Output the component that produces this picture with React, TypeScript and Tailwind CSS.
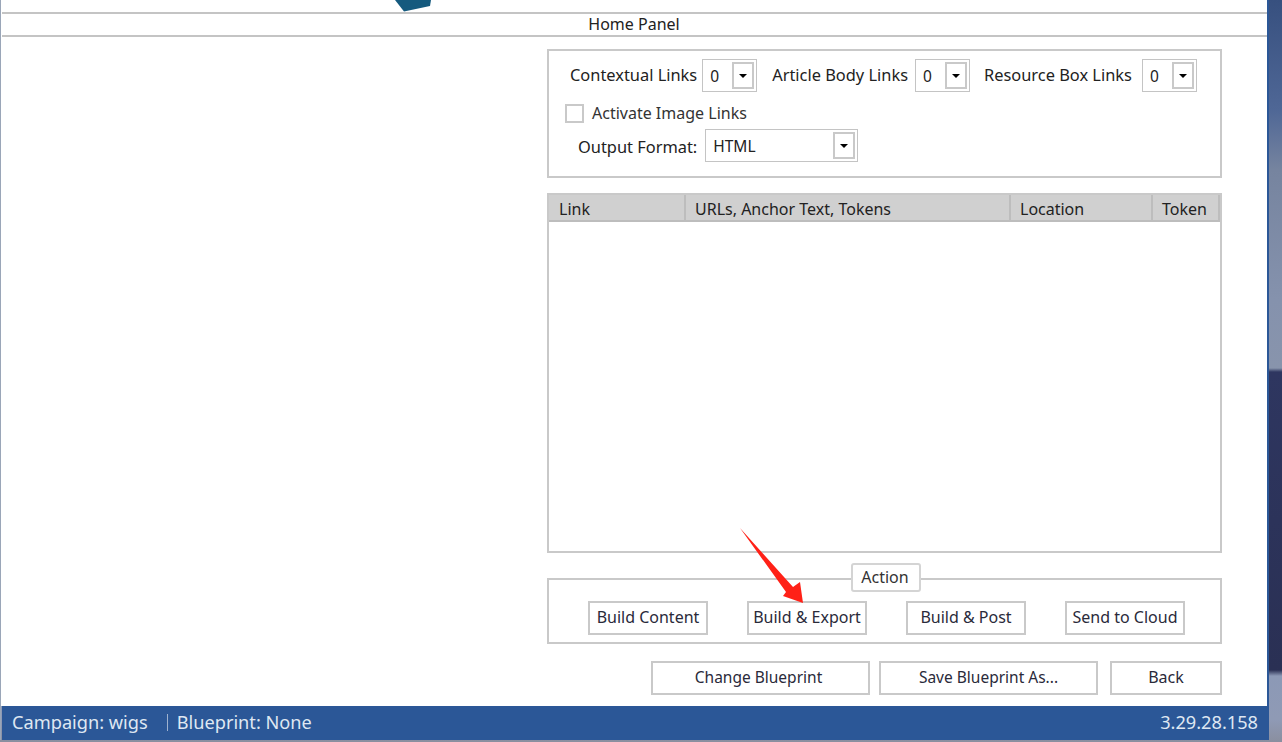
import { ReactNode } from "react";

function Dropdown({ value, width }: { value: string; width: string }) {
  return (
    <div className={`flex h-[33px] items-center justify-between border border-[#c4c4c4] bg-white pl-[7px] pr-[2px] ${width}`}>
      <span className="pt-[2px] text-[15.5px] leading-none text-[#222]">{value}</span>
      <div className="flex h-[27px] w-[22px] items-center justify-center border-2 border-[#c9c9c9]">
        <div className="h-0 w-0 border-x-[4px] border-t-[4px] border-x-transparent border-t-black" />
      </div>
    </div>
  );
}

function Btn({ children, width, size = "text-[16px]" }: { children: ReactNode; width: string; size?: string }) {
  return (
    <button className={`flex h-[34px] items-center justify-center border-2 border-[#c9c9c9] bg-white pb-[2px] text-[#2a2a3a] ${size} ${width}`}>
      {children}
    </button>
  );
}

function HeadCell({ children, width }: { children: ReactNode; width: string }) {
  return (
    <div className={`flex items-end border-r-2 border-[#bdbdbd] pb-[1px] text-[16px] leading-5 text-[#222] ${width}`}>
      {children}
    </div>
  );
}

export default function App() {
  return (
    <div className="flex h-[742px] w-[1282px] overflow-hidden bg-[linear-gradient(to_bottom,#37507f_0px,#4f6796_110px,#76849f_170px,#8592ad_300px,#8894ac_368px,#2e3660_372px,#2a3054_670px,#8c99b6_676px,#8f9ab5_720px,#8a8f9f_742px)] font-['Noto_Sans',sans-serif]">
      <div className="h-[740px] w-px bg-[#9aa6b8]" />
      <div className="flex h-[740px] w-[1268px] flex-col">
        <div className="flex flex-1 flex-col border-r-2 border-[#2b5797] bg-white pl-px">
          <div className="h-[14px] shrink-0 border-b-2 border-[#c4c4c4] pl-[393px]">
            <svg width="38" height="12" viewBox="0 0 38 12" className="block">
              <path d="M0 0 L36 0 L35 6 L9 11.5 Z" fill="#155a7e" />
            </svg>
          </div>
          <div className="flex h-[23px] shrink-0 items-center justify-center border-b-2 border-[#c4c4c4] pb-[2px] pr-[1px] text-[16px] text-[#222]">
            Home Panel
          </div>

          <div className="ml-[545px] mt-[12px] flex w-[675px] flex-col">
            <div className="h-[129px] border-2 border-[#c9c9c9] px-[16px] pt-[8px]">
              <div className="flex items-center text-[16.4px] text-[#222]">
                <span className="ml-[5px]">Contextual Links</span>
                <div className="ml-[5px]"><Dropdown value="0" width="w-[55px]" /></div>
                <span className="ml-[15px]">Article Body Links</span>
                <div className="ml-[7px]"><Dropdown value="0" width="w-[55px]" /></div>
                <span className="ml-[14px]">Resource Box Links</span>
                <div className="ml-[10px]"><Dropdown value="0" width="w-[55px]" /></div>
              </div>
              <div className="mt-[9px] flex h-[24px] items-center text-[16px] text-[#333]">
                <div className="h-[19px] w-[19px] border-2 border-[#c9c9c9]" />
                <span className="ml-[8px]">Activate Image Links</span>
              </div>
              <div className="mt-[4px] flex items-center text-[16.4px] text-[#222]">
                <span className="ml-[13px] pt-[3px]">Output Format:</span>
                <div className="ml-[8px]"><Dropdown value="HTML" width="w-[153px]" /></div>
              </div>
            </div>

            <div className="mt-[15px] h-[360px] border-2 border-[#c9c9c9]">
              <div className="flex h-[27px] border-b-2 border-[#bdbdbd] bg-[#d0d0d0]">
                <HeadCell width="w-[137px] pl-[10px]">Link</HeadCell>
                <HeadCell width="w-[325px] pl-[9px]">URLs, Anchor Text, Tokens</HeadCell>
                <HeadCell width="w-[142px] pl-[9px]">Location</HeadCell>
                <HeadCell width="flex-1 pl-[9px]">Token</HeadCell>
              </div>
            </div>

            <div className="relative mt-[25px] flex h-[66px] items-start gap-[39px] border-2 border-[#c9c9c9] pl-[39px] pt-[21px]">
              <div className="absolute left-[302px] top-[-17px] flex h-[29px] w-[70px] items-center justify-center rounded-[3px] border-2 border-[#d4d4d4] bg-white pb-[2px] pr-[2px] text-[16px] text-[#333]">
                Action
              </div>
              <Btn width="w-[120px]">Build Content</Btn>
              <Btn width="w-[120px]">Build &amp; Export</Btn>
              <Btn width="w-[120px]">Build &amp; Post</Btn>
              <Btn width="w-[120px]">Send to Cloud</Btn>
            </div>

            <div className="mt-[17px] flex justify-end">
              <Btn width="w-[219px]" size="pr-[4px] pt-[2px] text-[15.5px]">Change Blueprint</Btn>
              <div className="ml-[9px]"><Btn width="w-[219px]" size="pt-[2px] text-[15.5px]">Save Blueprint As...</Btn></div>
              <div className="ml-[12px]"><Btn width="w-[112px]">Back</Btn></div>
            </div>
          </div>
        </div>
        <div className="ml-px flex h-[34px] shrink-0 items-center justify-between bg-[#2b5797] pl-[10px] pr-[11px] text-[18.2px] text-[#dfe7f2]">
          <div className="flex items-center">
            <span>Campaign: wigs</span>
            <span className="ml-[19px] h-[17px] w-px bg-[#9fb2cf]" />
            <span className="ml-[9px]">Blueprint: None</span>
          </div>
          <span>3.29.28.158</span>
        </div>
      </div>

      {/* red annotation arrow */}
      <svg className="absolute left-0 top-0" width="1282" height="742" viewBox="0 0 1282 742">
        <path d="M740 528 L793 587 L800 582 L803 603 L783 596 L786 592 Z" fill="#ff2117" />
      </svg>
    </div>
  );
}
